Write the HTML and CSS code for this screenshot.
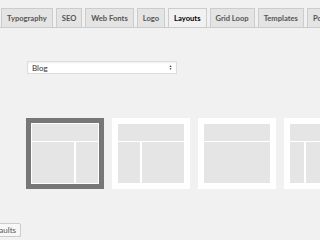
FILE: index.html
```html
<!DOCTYPE html>
<html>
<head>
    <title>Theme Options - Layouts</title>
    <link rel="stylesheet" href="styles.css">
</head>
<body>
    <nav class="nav-tabs">
        <a class="nav-tab">Typography</a>
        <a class="nav-tab">SEO</a>
        <a class="nav-tab">Web Fonts</a>
        <a class="nav-tab">Logo</a>
        <a class="nav-tab active">Layouts</a>
        <a class="nav-tab">Grid Loop</a>
        <a class="nav-tab">Templates</a>
        <a class="nav-tab">Posts</a>
    </nav>

    <div class="select-row">
        <div class="fake-select">
            <span>Blog</span>
            <span class="arrows">&#9650;<br>&#9660;</span>
        </div>
    </div>

    <div class="layouts">
        <!-- content / sidebar -->
        <div class="layout selected cols-cs">
            <div class="cell head"></div>
            <div class="cell"></div>
            <div class="cell"></div>
        </div>
        <!-- sidebar / content -->
        <div class="layout cols-sc">
            <div class="cell head"></div>
            <div class="cell"></div>
            <div class="cell"></div>
        </div>
        <!-- full width -->
        <div class="layout cols-full">
            <div class="cell head"></div>
            <div class="cell"></div>
        </div>
        <!-- sidebar / content / sidebar -->
        <div class="layout cols-scs">
            <div class="cell head"></div>
            <div class="cell"></div>
            <div class="cell"></div>
            <div class="cell"></div>
        </div>
    </div>

    <div class="footer-row">
        <button class="button">Restore Defaults</button>
    </div>
</body>
</html>
```

FILE: styles.css
```css
body {
    margin: 0;
    background: #f1f1f1;
    font-family: Lato, "Open Sans", Arial, sans-serif;
    color: #444;
    overflow: hidden;
}
.nav-tabs {
    display: flex;
    gap: 3px;
    padding: 8px 0 0 1px;
    border-bottom: 1px solid #ccc;
    white-space: nowrap;
    overflow: hidden;
}
.nav-tab {
    flex-shrink: 0;
    display: block;
    padding: 3px 5px;
    line-height: 12px;
    font-size: 7.6px;
    font-weight: 700;
    color: #555;
    background: #e4e4e4;
    border: 1px solid #ccc;
    border-bottom: none;
}
.nav-tab.active {
    background: #f1f1f1;
    color: #000;
    margin-bottom: -1px;
    border-bottom: 1px solid #f1f1f1;
}
.select-row {
    padding: 33px 0 0 27px;
}
.fake-select {
    width: 150px;
    height: 13px;
    box-sizing: border-box;
    display: flex;
    align-items: center;
    justify-content: space-between;
    padding: 0 4px;
    background: #fff;
    border: 1px solid #ddd;
    box-shadow: inset 0 1px 2px rgba(0, 0, 0, 0.07);
    font-size: 8px;
    color: #333;
}
.arrows {
    font-size: 3px;
    line-height: 3px;
    color: #222;
}
.layouts {
    display: flex;
    gap: 8px;
    padding: 44px 0 0 26px;
}
.layout {
    flex-shrink: 0;
    width: 78px;
    height: 71px;
    box-sizing: border-box;
    border: 5px solid #fff;
    padding: 1px;
    background: #fff;
    display: grid;
    grid-template-rows: 17px 1fr;
    gap: 1px 2px;
}
.layout.selected {
    border-color: #777;
}
.cell {
    background: #e5e5e5;
}
.cell.head {
    grid-column: 1 / -1;
}
.cols-cs {
    grid-template-columns: 42px 1fr;
}
.cols-sc {
    grid-template-columns: 22px 1fr;
}
.cols-full {
    grid-template-columns: 1fr;
}
.cols-scs {
    grid-template-columns: 14px 1fr 14px;
}
.footer-row {
    display: flex;
    justify-content: flex-end;
    width: 21px;
    margin-top: 34px;
}
.button {
    flex-shrink: 0;
    height: 14px;
    padding: 0 4px;
    font-family: Lato, "Open Sans", Arial, sans-serif;
    font-size: 8px;
    color: #555;
    background: #f7f7f7;
    border: 1px solid #ccc;
    border-radius: 2px;
    box-shadow: 0 1px 0 #ccc;
}
```
